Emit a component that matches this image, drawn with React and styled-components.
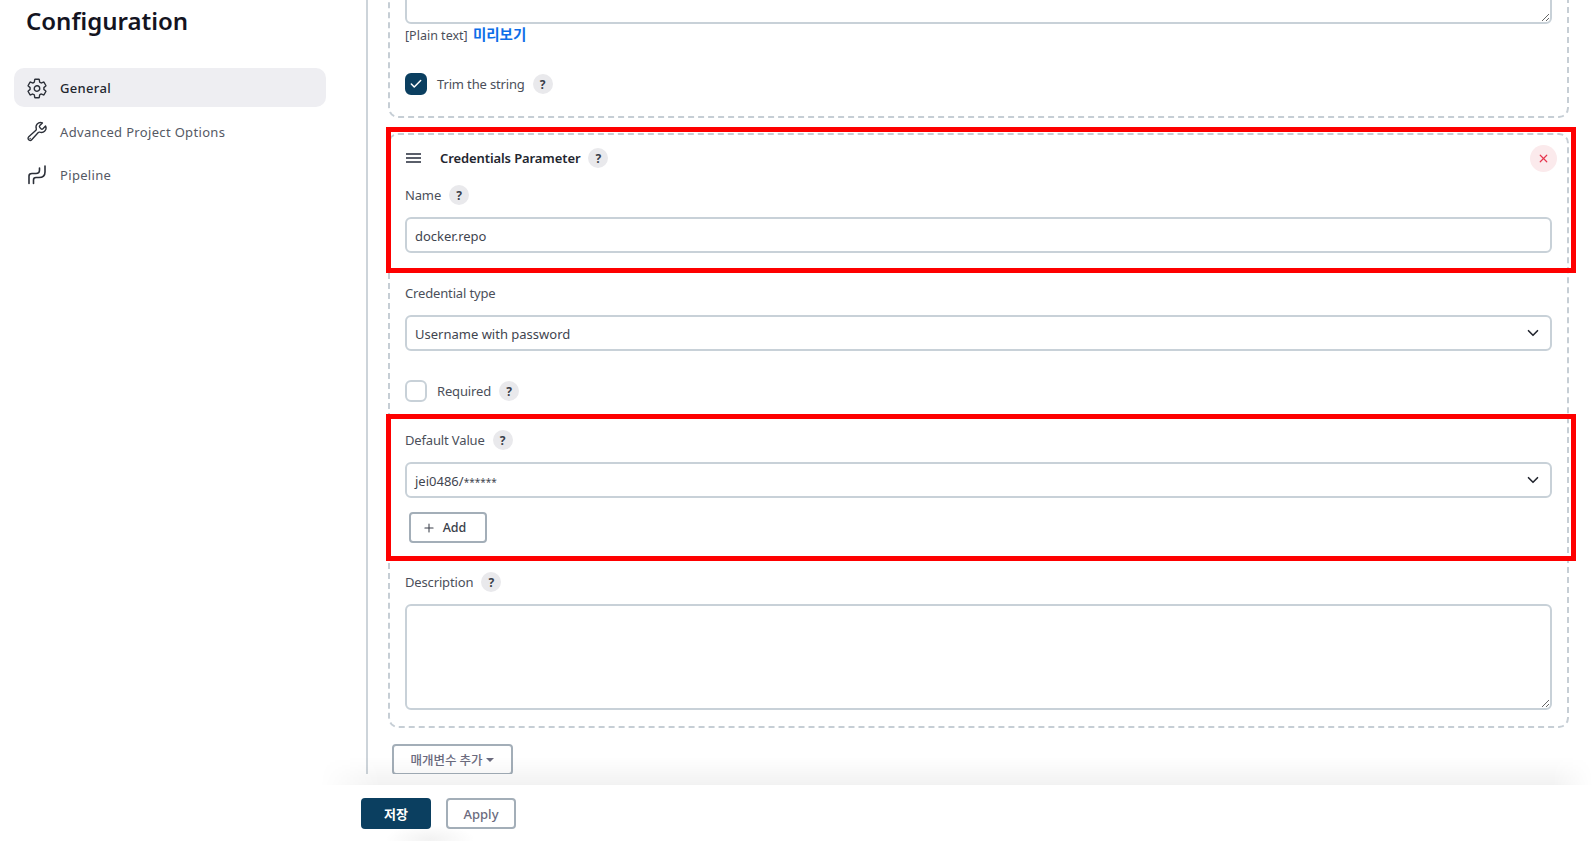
import styled, { createGlobalStyle } from 'styled-components';
import { IoSettingsOutline, IoBuildOutline } from 'react-icons/io5';
import { ChevronDown, Check, X, Plus } from 'lucide-react';

const FONT = `"Noto Sans", "Noto Sans CJK KR", sans-serif`;
const KR_FONT = `"Noto Sans CJK KR", "Noto Sans", sans-serif`;

const GlobalStyle = createGlobalStyle`
  html, body {
    margin: 0;
    height: 100%;
    background: #fff;
    overflow: hidden;
  }
  body {
    font-family: ${FONT};
    font-size: 13px;
    color: #3f4550;
  }
  * {
    box-sizing: border-box;
  }
`;

const PipelineIcon = () => (
  <svg width="19" height="20" viewBox="-1 -1 19 20" fill="none" stroke="#2b2f38" strokeWidth="1.6" strokeLinecap="round">
    <path d="M0 17.5V10Q0 7.5 3 7.5H7Q10.5 7.5 10.5 4V2" />
    <path d="M4.5 17.5V14Q4.5 11.5 7 11.5H10Q16 11.5 16 6V0" />
  </svg>
);

const NAV_ITEMS = [
  { label: 'General', icon: <IoSettingsOutline size={23} />, active: true },
  { label: 'Advanced Project Options', icon: <IoBuildOutline size={23} /> },
  { label: 'Pipeline', icon: <PipelineIcon /> },
];

const Help = () => <HelpBadge>?</HelpBadge>;

const CaretSelect = ({ children }) => (
  <SelectBox>
    {children}
    <SelectChevron>
      <ChevronDown size={18} strokeWidth={2.2} />
    </SelectChevron>
  </SelectBox>
);

const App = () => {
  return (
    <Page>
      <GlobalStyle />
      <Columns>
        <Sidebar>
          <Title>Configuration</Title>
          <Nav>
            {NAV_ITEMS.map((item) => (
              <NavItem key={item.label} $active={item.active}>
                <NavIcon>{item.icon}</NavIcon>
                {item.label}
              </NavItem>
            ))}
          </Nav>
        </Sidebar>

        <Main>
          <Card $first>
            <TextArea $height={80} readOnly />
            <PreviewLine>
              [Plain text] <PreviewLink href="#">미리보기</PreviewLink>
            </PreviewLine>
            <CheckRow $top={29}>
              <CheckBox $checked>
                <Check size={14} strokeWidth={2.6} color="#fff" />
              </CheckBox>
              Trim the string
              <Help />
            </CheckRow>
          </Card>

          <Card>
            <Marked>
              <Highlight $top={18} $bottom={20} />
              <CardHeader>
                <Grip>
                  <span />
                  <span />
                  <span />
                </Grip>
                <CardTitle>Credentials Parameter</CardTitle>
                <Help />
                <CloseButton>
                  <X size={13} strokeWidth={2.2} />
                </CloseButton>
              </CardHeader>
              <Label $top={14}>
                Name
                <Help />
              </Label>
              <TextInput defaultValue="docker.repo" />
            </Marked>

            <Label $top={30}>Credential type</Label>
            <CaretSelect>Username with password</CaretSelect>

            <CheckRow $top={29}>
              <CheckBox />
              Required
              <Help />
            </CheckRow>

            <Marked $top={28}>
              <Highlight $top={16} $bottom={18} />
              <Label>
                Default Value
                <Help />
              </Label>
              <CaretSelect>
                jei0486/<Masked>******</Masked>
              </CaretSelect>
              <AddButton>
                <Plus size={14} strokeWidth={1.8} />
                Add
              </AddButton>
            </Marked>

            <Label $top={29}>
              Description
              <Help />
            </Label>
            <TextArea $height={106} readOnly />
          </Card>

          <AddParamButton>
            매개변수 추가
            <Caret />
          </AddParamButton>
        </Main>
      </Columns>

      <BottomBar>
        <SaveButton>저장</SaveButton>
        <ApplyButton>Apply</ApplyButton>
      </BottomBar>
    </Page>
  );
};

const Page = styled.div`
  display: flex;
  flex-direction: column;
  width: 1593px;
  height: 841px;
  overflow: hidden;
`;

const Columns = styled.div`
  display: grid;
  grid-template-columns: 366px 1fr;
  height: 774px;
  flex: none;
  overflow: hidden;
`;

const Sidebar = styled.aside`
  padding: 4px 0 0 14px;
`;

const Title = styled.h1`
  margin: 0 0 30px 12px;
  font-size: 24px;
  line-height: 34px;
  font-weight: 600;
  color: #14141f;
`;

const Nav = styled.nav`
  display: flex;
  flex-direction: column;
  gap: 4.5px;
  width: 312px;
`;

const NavItem = styled.a`
  display: flex;
  align-items: center;
  gap: 12px;
  height: 39px;
  padding: 1px 0 0 12px;
  border-radius: 10px;
  font-size: 13px;
  letter-spacing: 0.33px;
  background: ${({ $active }) => ($active ? '#eeeef2' : 'transparent')};
  color: ${({ $active }) => ($active ? '#23262f' : '#555964')};
  font-weight: ${({ $active }) => ($active ? 500 : 400)};
`;

const NavIcon = styled.span`
  display: flex;
  justify-content: center;
  width: 22px;
  color: #2b2f38;
`;

const Main = styled.main`
  display: flex;
  flex-direction: column;
  align-items: flex-start;
  margin-top: -58px;
  padding: 0 24px 0 20px;
  border-left: 2px solid #cdd4da;
  height: 840px;
`;

const Card = styled.section`
  width: 100%;
  margin-top: ${({ $first }) => ($first ? '0' : '15px')};
  padding: 10px 15px 16px 15px;
  border: 2px dashed #c6ced5;
  border-radius: 10px;
  padding-top: ${({ $first }) => ($first ? '0' : '10px')};
  padding-bottom: ${({ $first }) => ($first ? '21px' : '16px')};
`;

const Marked = styled.div`
  position: relative;
  margin-top: ${({ $top }) => $top || 0}px;
`;

const Highlight = styled.div`
  position: absolute;
  top: -${({ $top }) => $top}px;
  right: -24px;
  bottom: -${({ $bottom }) => $bottom}px;
  left: -19px;
  border: 5px solid #fe0000;
  pointer-events: none;
`;

const CardHeader = styled.div`
  display: flex;
  align-items: center;
  height: 26px;
`;

const Grip = styled.div`
  display: flex;
  flex-direction: column;
  gap: 2.5px;
  width: 15px;
  margin: 0 19px 0 1px;

  span {
    display: block;
    height: 1.5px;
    background: #5a5f6a;
  }
`;

const CardTitle = styled.h3`
  margin: 0;
  font-size: 13px;
  font-weight: 600;
  letter-spacing: -0.1px;
  color: #23262f;
`;

const HelpBadge = styled.span`
  display: inline-flex;
  align-items: center;
  justify-content: center;
  flex: none;
  width: 20px;
  height: 20px;
  margin-left: 8px;
  border-radius: 50%;
  background: #e9e9ec;
  color: #3a3f4a;
  font-size: 12px;
  font-weight: 700;
  letter-spacing: 0;
`;

const CloseButton = styled.button`
  display: flex;
  align-items: center;
  justify-content: center;
  width: 27px;
  height: 27px;
  margin-left: auto;
  margin-right: -5px;
  padding: 0;
  border: 0;
  border-radius: 50%;
  background: #fbeaec;
  color: #e6354e;
`;

const Label = styled.div`
  display: flex;
  align-items: center;
  height: 20px;
  margin-top: ${({ $top }) => $top || 0}px;
  margin-bottom: 12px;
  font-size: 13px;
  letter-spacing: -0.15px;
  color: #4b4f5a;
`;

const fieldBase = `
  display: block;
  width: 100%;
  border: 2px solid #c8d1d8;
  border-radius: 6px;
  background: #fff;
  color: #3f4550;
  font-family: ${FONT};
  font-size: 13px;
  outline: none;
`;

const TextInput = styled.input`
  ${fieldBase}
  height: 36px;
  padding: 1px 8px 0;
`;

const TextArea = styled.textarea`
  ${fieldBase}
  height: ${({ $height }) => $height}px;
  padding: 7px;
  resize: vertical;
`;

const SelectBox = styled.div`
  ${fieldBase}
  position: relative;
  height: 36px;
  padding: 0 8px;
  line-height: 34px;
`;

const Masked = styled.span`
  font-size: 10px;
`;

const SelectChevron = styled.span`
  position: absolute;
  top: 7px;
  right: 8px;
  display: flex;
  color: #23262f;
`;

const PreviewLine = styled.div`
  height: 20px;
  line-height: 20px;
  font-size: 12.5px;
  color: #4b4f5a;
`;

const PreviewLink = styled.a`
  margin-left: 2px;
  font-family: ${KR_FONT};
  font-size: 14.5px;
  font-weight: 700;
  color: #0d6ee8;
  text-decoration: none;
`;

const CheckRow = styled.label`
  display: flex;
  align-items: center;
  height: 22px;
  margin-top: ${({ $top }) => $top}px;
  letter-spacing: -0.15px;
  color: #4b4f5a;
`;

const CheckBox = styled.span`
  display: flex;
  align-items: center;
  justify-content: center;
  width: 22px;
  height: 22px;
  margin-right: 10px;
  border-radius: 6px;
  border: 2px solid ${({ $checked }) => ($checked ? '#0b3f60' : '#c8d1d8')};
  background: ${({ $checked }) => ($checked ? '#0b3f60' : '#fff')};
`;

const outlineButton = `
  border: 2px solid #a3aeb8;
  border-radius: 4px;
  background: #fff;
`;

const AddButton = styled.button`
  ${outlineButton}
  display: flex;
  align-items: center;
  justify-content: center;
  gap: 7px;
  width: 78px;
  height: 31px;
  margin: 14px 0 0 4px;
  padding: 0 8px 0 0;
  font-family: ${FONT};
  font-size: 12.5px;
  font-weight: 500;
  color: #3a3f4a;
`;

const AddParamButton = styled.button`
  ${outlineButton}
  display: flex;
  align-items: center;
  justify-content: center;
  gap: 4px;
  flex: none;
  width: 121px;
  height: 31px;
  margin: 16px 0 0 4px;
  padding: 0;
  font-family: ${KR_FONT};
  font-size: 12.5px;
  font-weight: 500;
  color: #6b6b7e;
`;

const Caret = styled.span`
  width: 0;
  height: 0;
  border-left: 4px solid transparent;
  border-right: 4px solid transparent;
  border-top: 4px solid #6b6b7e;
`;

const BottomBar = styled.footer`
  position: relative;
  display: flex;
  align-items: flex-start;
  gap: 15px;
  flex: 1;
  padding: 24px 0 0 361px;
  background: #fff;

  &::before {
    content: '';
    position: absolute;
    top: -17px;
    left: 320px;
    right: 0;
    height: 28px;
    background: linear-gradient(to bottom, rgba(0, 0, 0, 0), rgba(0, 0, 0, 0.05));
    -webkit-mask-image: linear-gradient(to right, transparent, #000 60px, #000 calc(100% - 40px), transparent);
    pointer-events: none;
  }

  &::after {
    content: '';
    position: absolute;
    left: 385px;
    bottom: -12px;
    width: 90px;
    height: 28px;
    background: radial-gradient(closest-side, rgba(0, 0, 0, 0.05), rgba(0, 0, 0, 0));
    pointer-events: none;
  }
`;

const SaveButton = styled.button`
  width: 70px;
  height: 31px;
  padding: 0;
  border: 0;
  border-radius: 4px;
  background: #0b3f60;
  color: #fff;
  font-family: ${KR_FONT};
  font-size: 13px;
  font-weight: 700;
`;

const ApplyButton = styled.button`
  ${outlineButton}
  width: 70px;
  height: 31px;
  padding: 0;
  font-family: ${FONT};
  font-size: 13px;
  font-weight: 500;
  color: #6b6b7e;
`;

export default App;
